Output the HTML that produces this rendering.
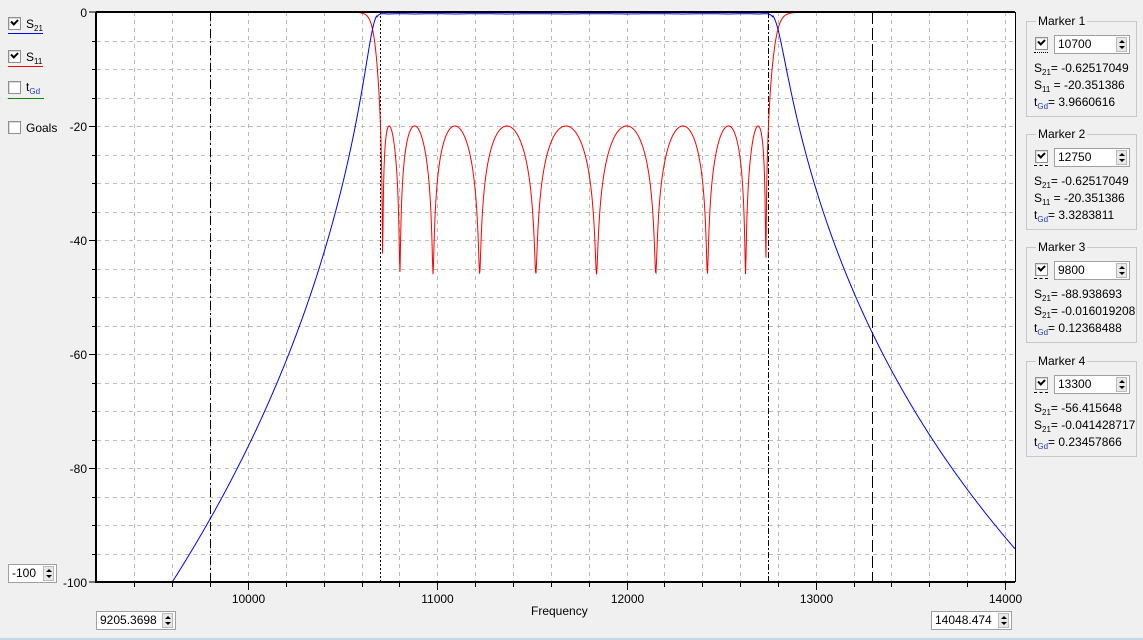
<!DOCTYPE html>
<html><head><meta charset="utf-8"><style>
body{margin:0;width:1143px;height:640px;background:#f0f0f0;font-family:"Liberation Sans",Arial,sans-serif;font-size:12px;color:#000;position:relative;overflow:hidden}
.a{position:absolute}
.cb{position:absolute;width:11px;height:11px;border:1px solid #8e8f8f;background:#fff;box-shadow:inset 1px 1px 0 #ddd}
.cb.c::after{content:"";position:absolute;left:2px;top:1px;width:5px;height:3px;border-left:2px solid #000;border-bottom:2px solid #000;transform:rotate(-45deg)}
.spin{position:absolute;background:#fff;border:1px solid #a0a0a0;height:19px;box-sizing:border-box;font-size:12px;line-height:17px;padding-left:3px}
.spin .b{position:absolute;right:2px;top:1px;width:11px;height:15px;background:#e8e8e8;border:1px solid #bbb;box-sizing:border-box}
.spin .b::before{content:"";position:absolute;left:2px;top:2px;border:3px solid transparent;border-bottom:3px solid #000;border-top:0}
.spin .b::after{content:"";position:absolute;left:2px;top:8px;border:3px solid transparent;border-top:3px solid #000;border-bottom:0}
.mk{position:absolute;left:1026px;width:111px;height:96px;border:1px solid #c8c8c8;box-sizing:border-box}
.mk .t{position:absolute;left:9px;top:-8px;background:#f0f0f0;padding:0 2px}
.mk .l{position:absolute;left:7px;font-size:12px;white-space:nowrap}
sub{font-size:8px;vertical-align:-3px}
.bl{color:#2040c0}
</style></head><body>
<div class="cb c" style="left:8px;top:17px"></div><div class="a" style="left:26px;top:17px">S<sub>21</sub></div>
<div class="a" style="left:8px;top:33px;width:35px;height:1px;background:#00f"></div>
<div class="cb c" style="left:8px;top:50px"></div><div class="a" style="left:26px;top:50px">S<sub>11</sub></div>
<div class="a" style="left:8px;top:66px;width:35px;height:1px;background:#f00"></div>
<div class="cb" style="left:8px;top:81px"></div><div class="a" style="left:26px;top:80px">t<sub class="bl">Gd</sub></div>
<div class="a" style="left:8px;top:98px;width:36px;height:1px;background:#080"></div>
<div class="cb" style="left:8px;top:121px"></div><div class="a" style="left:26px;top:121px">Goals</div>
<div class="spin" style="left:8px;top:564px;width:49px">-100<div class="b"></div></div>
<div class="spin" style="left:96px;top:611px;width:80px">9205.3698<div class="b"></div></div>
<div class="spin" style="left:931px;top:611px;width:81px">14048.474<div class="b"></div></div>
<div class="a" style="left:531px;top:604px">Frequency</div>
<div class="a" style="left:0;top:638px;width:1143px;height:2px;background:#c6d6e6"></div>

<svg class="a" style="left:0;top:0" width="1143" height="640" id="s">
<rect x="97" y="12" width="918" height="570" fill="#fff"/>
<g id="g" stroke="#bbb" stroke-dasharray="4,4" stroke-width="1" fill="none"></g>
<g id="tk" stroke="#000" stroke-width="1"></g>
<g id="lb" font-family="Liberation Sans,Arial,sans-serif" font-size="12" fill="#000"></g>
<g stroke="#000" stroke-width="1" fill="none">
<line x1="210.5" y1="12" x2="210.5" y2="582" stroke-dasharray="9,3,2,3"/>
<line x1="380.5" y1="12" x2="380.5" y2="582" stroke-dasharray="2,2"/>
<line x1="768.5" y1="12" x2="768.5" y2="582" stroke-dasharray="6,2,2,2"/>
<line x1="872.5" y1="12" x2="872.5" y2="582" stroke-dasharray="12,4"/>
</g>
<path id="p11" stroke="#f00" fill="none" stroke-width="1"/>
<path id="p21" stroke="#00f" fill="none" stroke-width="1"/>
<g stroke="#000" stroke-width="2" fill="none"><line x1="96" y1="12" x2="96" y2="583"/><line x1="96" y1="582" x2="1015" y2="582"/><line x1="96" y1="12" x2="1015" y2="12"/></g>
<line x1="1015.5" y1="12" x2="1015.5" y2="582" stroke="#000"/>
</svg>

<div class="mk" style="top:21px"><div class="t">Marker 1</div>
<div class="cb c" style="left:8px;top:15px"></div><div class="a" style="left:7px;top:30px;width:14px;border-top:1px dotted #000"></div>
<div class="spin" style="left:27px;top:13px;width:76px">10700<div class="b"></div></div>
<div class="l" style="top:39px">S<sub>21</sub>= -0.62517049</div>
<div class="l" style="top:56px">S<sub>11</sub> = -20.351386</div>
<div class="l" style="top:73px">t<sub class="bl">Gd</sub>= 3.9660616</div></div>
<div class="mk" style="top:134px"><div class="t">Marker 2</div>
<div class="cb c" style="left:8px;top:15px"></div><div class="a" style="left:7px;top:30px;width:14px;border-top:1px dashed #000"></div>
<div class="spin" style="left:27px;top:13px;width:76px">12750<div class="b"></div></div>
<div class="l" style="top:39px">S<sub>21</sub>= -0.62517049</div>
<div class="l" style="top:56px">S<sub>11</sub> = -20.351386</div>
<div class="l" style="top:73px">t<sub class="bl">Gd</sub>= 3.3283811</div></div>
<div class="mk" style="top:247px"><div class="t">Marker 3</div>
<div class="cb c" style="left:8px;top:15px"></div><div class="a" style="left:7px;top:30px;width:14px;border-top:1px dashed #000"></div>
<div class="spin" style="left:27px;top:13px;width:76px">9800<div class="b"></div></div>
<div class="l" style="top:39px">S<sub>21</sub>= -88.938693</div>
<div class="l" style="top:56px">S<sub>21</sub>= -0.016019208</div>
<div class="l" style="top:73px">t<sub class="bl">Gd</sub>= 0.12368488</div></div>
<div class="mk" style="top:361px"><div class="t">Marker 4</div>
<div class="cb c" style="left:8px;top:15px"></div><div class="a" style="left:7px;top:30px;width:14px;border-top:1px dashed #000"></div>
<div class="spin" style="left:27px;top:13px;width:76px">13300<div class="b"></div></div>
<div class="l" style="top:39px">S<sub>21</sub>= -56.415648</div>
<div class="l" style="top:56px">S<sub>21</sub>= -0.041428717</div>
<div class="l" style="top:73px">t<sub class="bl">Gd</sub>= 0.23457866</div></div>

<script>
var NS="http://www.w3.org/2000/svg";
function X(f){return 248+(f-10000)*0.18925}
function Y(d){return 12+(-d)*5.7}
function el(p,t,a,txt){var e=document.createElementNS(NS,t);for(var k in a)e.setAttribute(k,a[k]);if(txt!==undefined)e.textContent=String(txt);document.getElementById(p).appendChild(e);}
for(var f=9400;f<=14000;f+=200){var x=Math.round(X(f))+.5;el("g","line",{x1:x,y1:12,x2:x,y2:582});el("tk","line",{x1:x,y1:582,x2:x,y2:f%1000==0?590:587});
 if(f%1000==0)el("lb","text",{x:x,y:603,"text-anchor":"middle"},f);}
for(var d=-5;d>=-95;d-=5){var y=Math.round(Y(d))+.5;el("g","line",{x1:97,y1:y,x2:1015,y2:y});el("tk","line",{x1:d%20==0?89:92,y1:y,x2:96,y2:y});}
for(var d=0;d>=-100;d-=20){el("lb","text",{x:87,y:Y(d)+5,"text-anchor":"end"},d);}
el("tk","line",{x1:89,y1:12,x2:96,y2:12});el("tk","line",{x1:89,y1:582,x2:96,y2:582});
var f0=Math.sqrt(10700*12750),bw=2050,e2=0.0101,N=10;
function T(w){w=Math.abs(w);return w<=1?Math.cos(N*Math.acos(w)):Math.cosh(N*Math.acosh(w));}
var a="",b="";
for(var px=97;px<=1015;px+=0.5){var f=10000+(px-248)/0.18925;var w=(f0/bw)*(f/f0-f0/f);var t=T(w);var k=e2*t*t;
 var s21=-10*Math.log10(1+k);var s11=10*Math.log10(k/(1+k)+2.5e-5);
 if(Math.abs(w)<1.02)s21-=0.3;
 var y1=Math.min(Y(s21),582),y2=Math.min(Math.max(Y(s11),12),582);
 a+=(a?"L":"M")+px+" "+y1.toFixed(1);
 if(f>10550&&f<13050)b+=(b?"L":"M")+px+" "+y2.toFixed(1);}
document.getElementById("p21").setAttribute("d",a);
document.getElementById("p11").setAttribute("d",b);
</script>
</body></html>
